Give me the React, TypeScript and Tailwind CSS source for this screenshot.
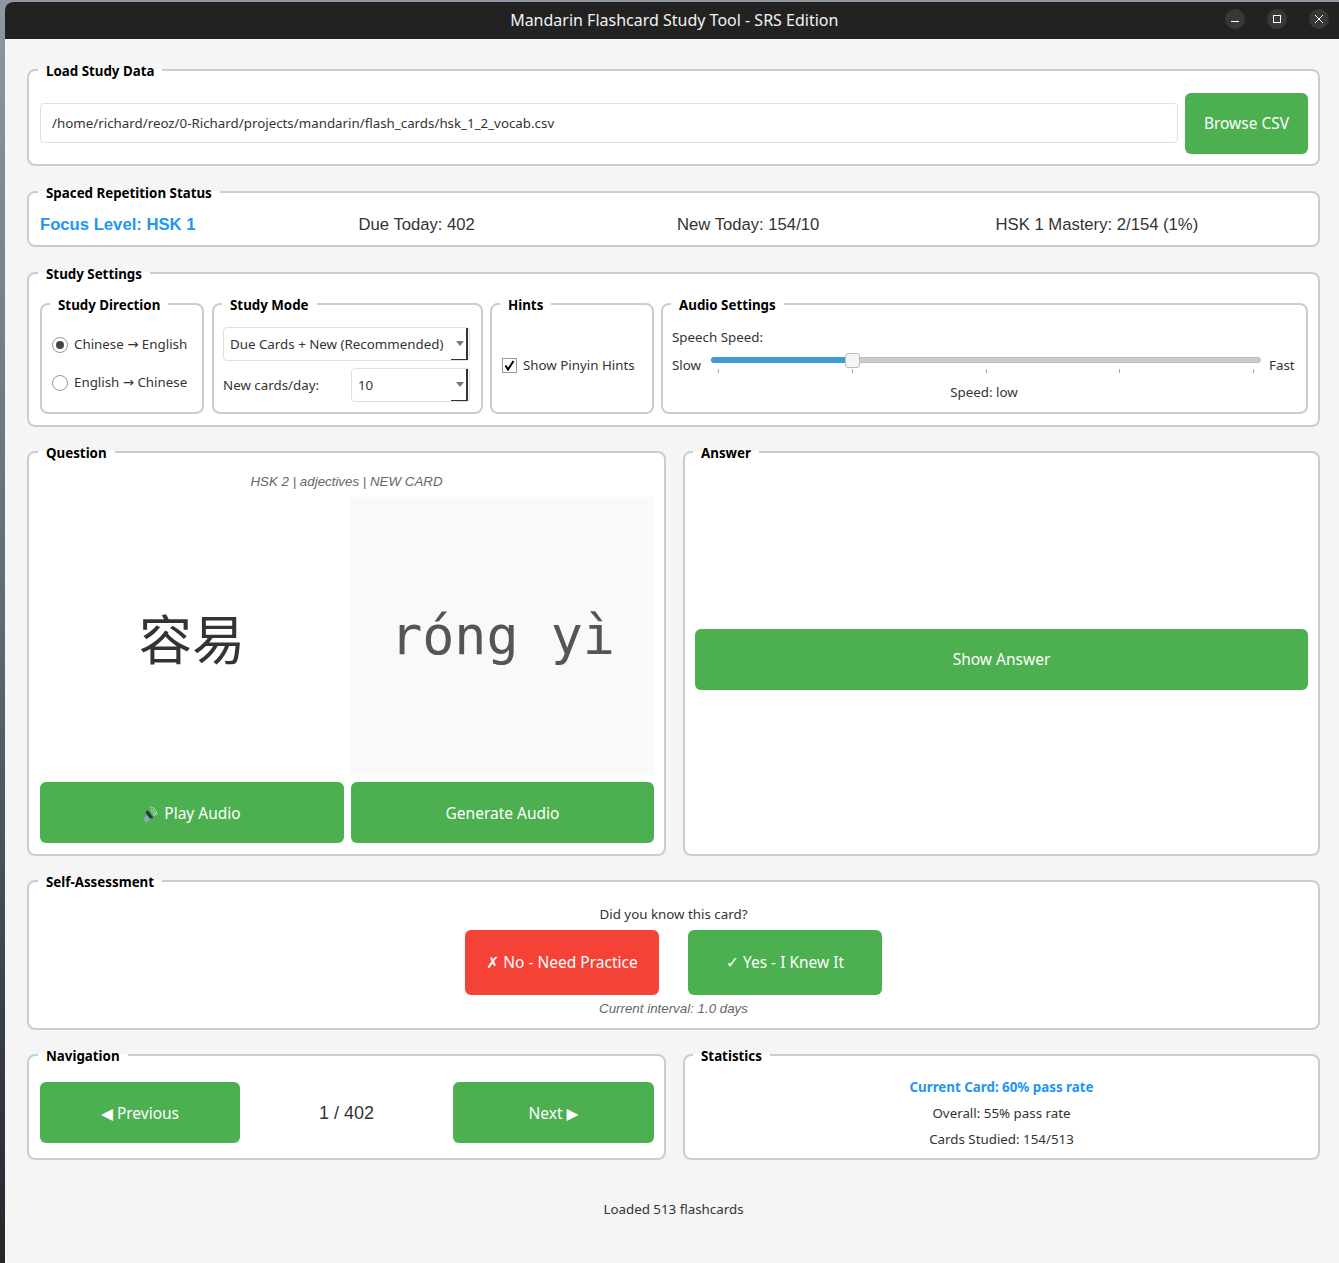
import { ReactNode } from "react";

const Panel = ({
  title,
  className = "",
  legendClass = "ml-2",
  children,
}: {
  title: string;
  className?: string;
  legendClass?: string;
  children: ReactNode;
}) => (
  <fieldset className={`border-2 border-[#cccccc] rounded-lg bg-white min-w-0 ${className}`}>
    <legend className={`px-2 h-5 text-[13.33px] leading-[22px] font-bold text-black ${legendClass}`}>{title}</legend>
    {children}
  </fieldset>
);

const GreenButton = ({ className = "", children }: { className?: string; children: ReactNode }) => (
  <button className={`flex items-center justify-center rounded-md bg-[#4caf50] text-[15.5px] text-white ${className}`}>
    {children}
  </button>
);

const ComboBox = ({ value, className = "" }: { value: string; className?: string }) => (
  <div className={`relative flex items-center pt-px rounded border border-[#e0e0e0] bg-white text-[#333333] ${className}`}>
    {value}
    <div className="absolute right-px top-0 bottom-0 w-[17px] border-r-2 border-[#333333]">
      <div className="absolute bottom-0 left-0 right-0 h-px bg-[#333333]" />
      <div className="absolute left-[5px] top-[13px] border-x-[4px] border-t-[5px] border-x-transparent border-t-[#777777]" />
    </div>
  </div>
);

const SpeakerIcon = () => (
  <svg width="15" height="17" viewBox="0 0 15 17" className="mr-[6px]" fill="none">
    <path d="M7 1 C11 1 14 4.500 14 9 M7.500 3 C10.500 3.500 12.500 6 12.500 9.500 M8 5 C10 5.500 11 7.500 11 10" stroke="#b5dcb8" strokeWidth="1" />
    <path d="M1 13 L4 8 L9 11 L6 14 L4 16.500 L1.500 15.500 Z" fill="#8fa9bb" />
    <path d="M2.500 5.500 L5 4.500 L10.500 12 L7 12.500 L4 9 Z" fill="#27363f" />
  </svg>
);

const ticks = [0, 1, 2, 3, 4];

export default function App() {
  return (
    <div
      className="flex w-[1339px] h-[1263px] overflow-hidden bg-gradient-to-b from-[#8c98a3] via-[#5f6973] to-[#23272c] pt-[2px]"
      style={{ fontFamily: '"Noto Sans", "DejaVu Sans", sans-serif' }}
    >
      <div className="w-[4.5px] shrink-0" />
      <div className="flex-1 flex flex-col min-w-0 rounded-tl-lg overflow-hidden bg-[#f5f5f5] text-[13.33px] text-[#333333]">
        {/* title bar */}
        <div className="relative shrink-0 h-[37px] pb-[2px] pl-[5px] bg-[#222222] flex items-center justify-center text-[16px] text-[#f2f2f2]">
          Mandarin Flashcard Study Tool - SRS Edition
          <div className="absolute right-[10px] top-[7px] flex gap-[22px]">
            <div className="w-5 h-5 rounded-full bg-[#383838] flex items-center justify-center">
              <div className="w-2 h-px mt-[4px] bg-white" />
            </div>
            <div className="w-5 h-5 rounded-full bg-[#383838] flex items-center justify-center">
              <div className="w-2 h-2 border border-white" />
            </div>
            <div className="w-5 h-5 rounded-full bg-[#383838] flex items-center justify-center">
              <svg width="10" height="10" viewBox="0 0 10 10" stroke="#ffffff" strokeWidth="1">
                <path d="M1 1 L9 9 M9 1 L1 9" />
              </svg>
            </div>
          </div>
        </div>

        <div className="flex-1 flex flex-col gap-[16px] pt-[21px] pl-[22.5px] pr-[19px]">
          <Panel title="Load Study Data" legendClass="ml-[9px]">
            <div className="flex items-center gap-[7px] pl-[11px] pr-[10px] pt-[13px] pb-[10px]">
              <input
                readOnly
                value="/home/richard/reoz/0-Richard/projects/mandarin/flash_cards/hsk_1_2_vocab.csv"
                className="flex-1 h-[40px] mb-[1px] px-[11px] rounded border border-[#e0e0e0] bg-white text-[13.33px] text-[#333333] outline-none"
              />
              <GreenButton className="w-[123px] h-[61px]">Browse CSV</GreenButton>
            </div>
          </Panel>

          <Panel title="Spaced Repetition Status" legendClass="ml-[9px]">
            <div
              className="grid grid-cols-4 items-center h-[43px] pt-[2px] pl-[11px] pr-[4px] text-[16.67px]"
              style={{ fontFamily: '"Liberation Sans", sans-serif' }}
            >
              <div className="font-bold text-[#2196f3]">Focus Level: HSK 1</div>
              <div>Due Today: 402</div>
              <div>New Today: 154/10</div>
              <div>HSK 1 Mastery: 2/154 (1%)</div>
            </div>
          </Panel>

          <Panel title="Study Settings" legendClass="ml-[9px]">
            <div className="flex gap-[7px] pl-[11px] pr-[10px] pt-[11px] pb-[11px]">
              <Panel title="Study Direction" className="w-[164px] mr-px shrink-0">
                <div className="flex flex-col gap-[18px] h-[98px] pl-[10px] pt-[21px]">
                  <div className="flex items-center gap-[6px] h-5">
                    <div className="w-4 h-4 rounded-full border border-[#999999] flex items-center justify-center">
                      <div className="w-2 h-2 rounded-full bg-[#444444]" />
                    </div>
                    Chinese → English
                  </div>
                  <div className="flex items-center gap-[6px] h-5">
                    <div className="w-4 h-4 rounded-full border border-[#999999]" />
                    English → Chinese
                  </div>
                </div>
              </Panel>

              <Panel title="Study Mode" className="w-[271px] shrink-0">
                <div className="flex flex-col gap-[7px] h-[98px] pl-[9px] pt-[13px]">
                  <ComboBox value="Due Cards + New (Recommended)" className="w-[247px] h-[34px] pl-[6px]" />
                  <div className="flex items-center justify-between w-[247px]">
                    <span className="pt-[2px]">New cards/day:</span>
                    <ComboBox value="10" className="w-[119px] h-[34px] pl-[6px]" />
                  </div>
                </div>
              </Panel>

              <Panel title="Hints" className="w-[164px] shrink-0">
                <div className="flex items-center gap-[6px] h-[98px] pl-[10px] pt-[5px]">
                  <div className="w-[15px] h-[15px] border border-[#999999] flex items-center justify-center">
                    <svg width="11" height="11" viewBox="0 0 11 11" fill="none" stroke="#000000" strokeWidth="2">
                      <path d="M1.500 5.500 L4 9.500 L9.500 1" />
                    </svg>
                  </div>
                  Show Pinyin Hints
                </div>
              </Panel>

              <Panel title="Audio Settings" className="flex-1">
                <div className="flex flex-col h-[98px] pl-[9px] pr-[10px] pt-[13px]">
                  <div className="h-5 leading-5">Speech Speed:</div>
                  <div className="flex items-start mt-[8px]">
                    <span className="w-[39px] leading-5">Slow</span>
                    <div className="flex-1">
                      <div className="relative h-[6px] mt-[2px] rounded-full border border-[#bdbdbd] bg-[#cccccc]">
                        <div className="h-[6px] w-[141px] -mt-px -ml-px rounded-l-full bg-[#3f9bd8]" />
                        <div className="absolute left-[133px] top-[-5px] w-[15px] h-[15px] rounded-[3px] border border-[#bbbbbb] bg-[#f5f5f5]" />
                      </div>
                      <div className="flex justify-between px-[7px] mt-[6px]">
                        {ticks.map((t) => (
                          <div key={t} className="w-px h-[4px] bg-[#aaaaaa]" />
                        ))}
                      </div>
                    </div>
                    <span className="w-[35px] pl-[8px] leading-5">Fast</span>
                  </div>
                  <div className="text-center leading-5 mt-[7px]">Speed: low</div>
                </div>
              </Panel>
            </div>
          </Panel>

          <div className="flex gap-[17px] -mt-px">
            <Panel title="Question" className="w-[639px] shrink-0" legendClass="ml-[9px]">
              <div className="px-[11px] pb-[11px]">
                <div
                  className="h-[35px] pt-[10px] text-center leading-5 italic text-[13.33px] text-[#666666]"
                  style={{ fontFamily: '"Liberation Sans", sans-serif' }}
                >
                  HSK 2 | adjectives | NEW CARD
                </div>
                <div className="grid grid-cols-[304px_303px] gap-x-[7px] gap-y-[7px]">
                  <div
                    className="h-[278px] flex items-center justify-center pt-[2px] text-[53.33px]"
                    style={{ fontFamily: '"Noto Sans CJK SC", sans-serif' }}
                  >
                    容易
                  </div>
                  <div
                    className="h-[278px] flex items-center justify-center bg-[#f9f9f9] text-[53.33px] text-[#555555]"
                    style={{ fontFamily: '"DejaVu Sans Mono", monospace' }}
                  >
                    róng yì
                  </div>
                  <GreenButton className="h-[61px] pt-[3px]">
                    <SpeakerIcon />
                    Play Audio
                  </GreenButton>
                  <GreenButton className="h-[61px] pt-[3px]">Generate Audio</GreenButton>
                </div>
              </div>
            </Panel>

            <Panel title="Answer" className="flex-1 flex flex-col">
              <div className="h-[392px] pt-[2px] flex items-center pl-[10px] pr-[10px]">
                <GreenButton className="w-full h-[61px] pt-px">Show Answer</GreenButton>
              </div>
            </Panel>
          </div>

          <Panel title="Self-Assessment" className="-mt-px" legendClass="ml-[9px]">
            <div className="flex flex-col items-center pt-[13px] pb-[9px]">
              <div className="h-5 leading-5">Did you know this card?</div>
              <div className="flex gap-[29px] mt-[6px]">
                <button className="w-[194px] h-[65px] rounded-md bg-[#f44336] text-[15.5px] text-white">
                  ✗ No - Need Practice
                </button>
                <button className="w-[194px] h-[65px] rounded-md bg-[#4caf50] text-[15.5px] text-white">
                  ✓ Yes - I Knew It
                </button>
              </div>
              <div
                className="h-5 mt-[4px] leading-5 italic text-[#666666]"
                style={{ fontFamily: '"Liberation Sans", sans-serif' }}
              >
                Current interval: 1.0 days
              </div>
            </div>
          </Panel>

          <div className="flex gap-[17px] -mt-px">
            <Panel title="Navigation" className="w-[639px] shrink-0" legendClass="ml-[9px]">
              <div className="flex items-center pl-[11px] pr-[10px] pt-[17px] pb-[15px]">
                <GreenButton className="w-[200px] h-[61px] pt-[3px]">◀ Previous</GreenButton>
                <div
                  className="flex-1 pt-[2px] text-center text-[18px]"
                  style={{ fontFamily: '"Liberation Sans", sans-serif' }}
                >
                  1 / 402
                </div>
                <GreenButton className="w-[201px] h-[61px] pt-[3px]">Next ▶</GreenButton>
              </div>
            </Panel>

            <Panel title="Statistics" className="flex-1">
              <div className="flex flex-col items-center justify-center gap-[6px] h-[93px] pt-[2px]">
                <div className="h-5 leading-5 font-bold text-[#2196f3]">Current Card: 60% pass rate</div>
                <div className="h-5 leading-5">Overall: 55% pass rate</div>
                <div className="h-5 leading-5">Cards Studied: 154/513</div>
              </div>
            </Panel>
          </div>

          <div className="text-center leading-5 mt-[23px]">Loaded 513 flashcards</div>
        </div>
      </div>
    </div>
  );
}
